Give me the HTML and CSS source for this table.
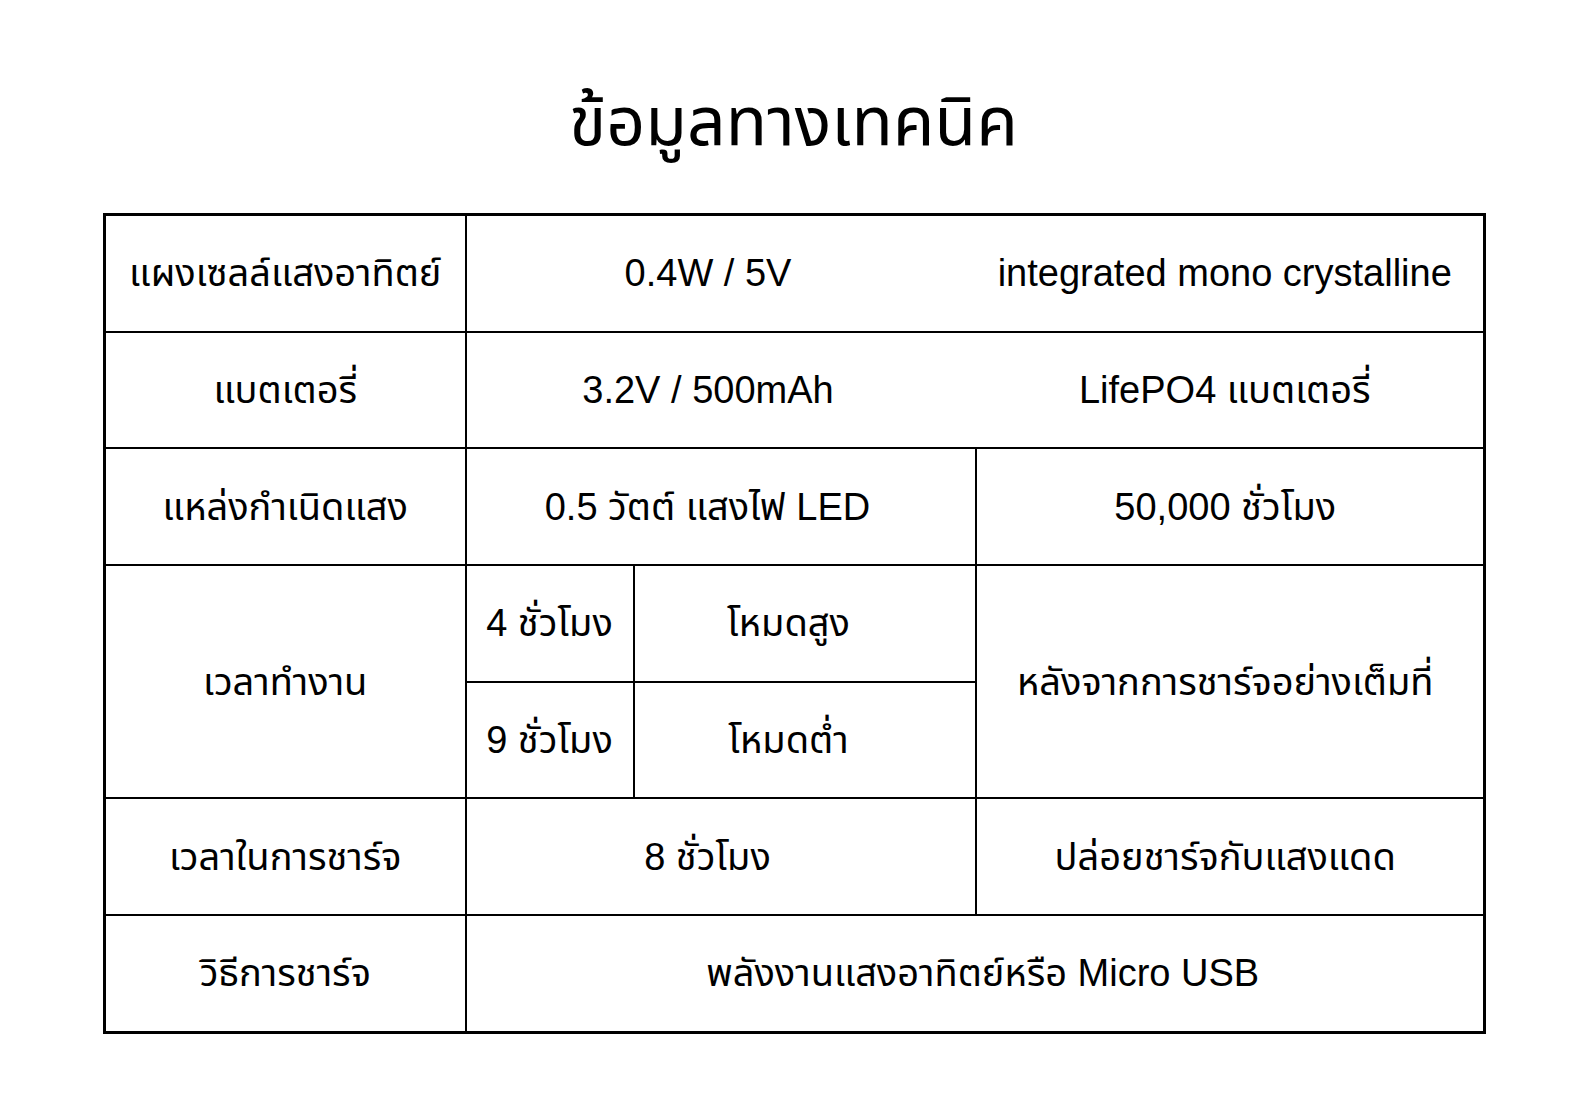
FILE: index.html
```html
<!DOCTYPE html>
<html lang="th">
<head>
<meta charset="utf-8">
<title>ข้อมูลทางเทคนิค</title>
<link rel="stylesheet" href="styles.css">
</head>
<body>
<main class="page">
  <h1 class="title">ข้อมูลทางเทคนิค</h1>
  <table class="spec">
    <colgroup>
      <col class="c1"><col class="c2"><col class="c3"><col class="c4">
    </colgroup>
    <tr>
      <td class="label">แผงเซลล์แสงอาทิตย์</td>
      <td colspan="2" class="mid no-right">0.4W / 5V</td>
      <td class="right no-left">integrated mono crystalline</td>
    </tr>
    <tr>
      <td class="label">แบตเตอรี่</td>
      <td colspan="2" class="mid no-right">3.2V / 500mAh</td>
      <td class="right no-left">LifePO4 แบตเตอรี่</td>
    </tr>
    <tr>
      <td class="label">แหล่งกำเนิดแสง</td>
      <td colspan="2" class="mid">0.5 วัตต์ แสงไฟ LED</td>
      <td class="right">50,000 ชั่วโมง</td>
    </tr>
    <tr>
      <td class="label" rowspan="2">เวลาทำงาน</td>
      <td class="hours">4 ชั่วโมง</td>
      <td class="mode">โหมดสูง</td>
      <td class="right" rowspan="2">หลังจากการชาร์จอย่างเต็มที่</td>
    </tr>
    <tr>
      <td class="hours">9 ชั่วโมง</td>
      <td class="mode">โหมดต่ำ</td>
    </tr>
    <tr>
      <td class="label">เวลาในการชาร์จ</td>
      <td colspan="2" class="mid">8 ชั่วโมง</td>
      <td class="right">ปล่อยชาร์จกับแสงแดด</td>
    </tr>
    <tr>
      <td class="label">วิธีการชาร์จ</td>
      <td colspan="3" class="wide">พลังงานแสงอาทิตย์หรือ Micro USB</td>
    </tr>
  </table>
</main>
</body>
</html>
```

FILE: styles.css
```css
html, body {
  margin: 0;
  padding: 0;
  background: #ffffff;
}
body {
  font-family: "Liberation Sans", "Noto Sans Thai", "Noto Sans Thai UI", "Kanit", "Prompt", "IBM Plex Sans Thai", "Noto Sans", sans-serif;
  color: #000;
}
.page {
  width: 1575px;
  height: 1102px;
  display: flex;
  flex-direction: column;
  align-items: flex-start;
}
.title {
  margin: 0;
  width: 100%;
  height: 213px;
  padding-top: 28px;
  padding-left: 12px;
  box-sizing: border-box;
  display: flex;
  align-items: center;
  justify-content: center;
  font-size: 68px;
  font-weight: 400;
  line-height: 1;
}
.spec {
  border-collapse: collapse;
  table-layout: fixed;
  width: 1380px;
  margin-left: 103px;
  border: 3px solid #000;
}
.c1 { width: 361px; }
.c2 { width: 168px; }
.c3 { width: 342px; }
.c4 { width: 509px; }
.spec td {
  border: 2.5px solid #000;
  height: 114.7px;
  padding: 0;
  text-align: center;
  vertical-align: middle;
  font-size: 38px;
  line-height: 1;
  white-space: nowrap;
}
.spec td.no-right { border-right: none; }
.spec td.no-left { border-left: none; }
.spec td.mid { padding-right: 26px; }
.spec td.right { padding-right: 9px; }
.spec td.wide { padding-left: 16px; }
.spec td.mode { padding-right: 32px; }
```
